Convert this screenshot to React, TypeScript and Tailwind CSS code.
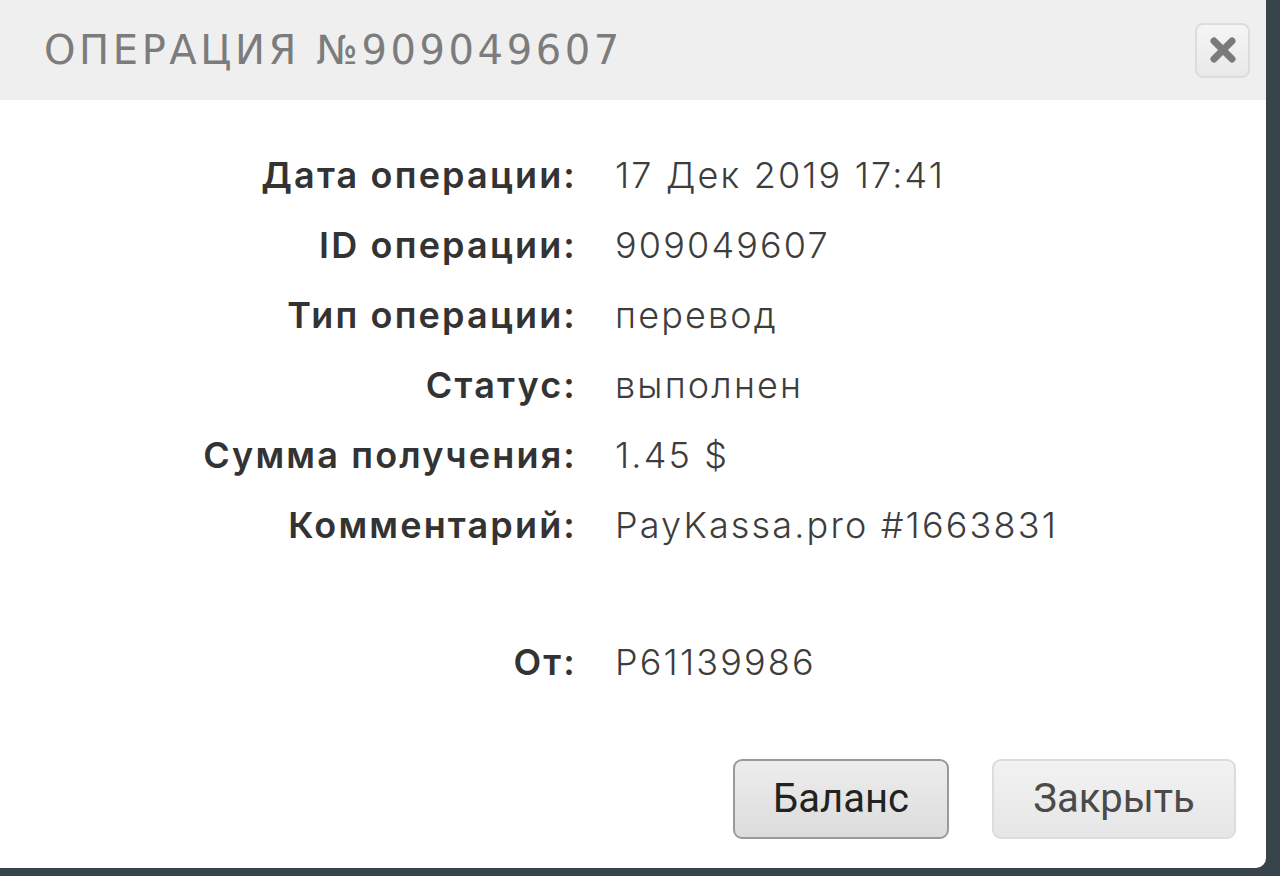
const rows = [
  { label: 'Дата операции:', value: '17 Дек 2019 17:41' },
  { label: 'ID операции:', value: '909049607' },
  { label: 'Тип операции:', value: 'перевод' },
  { label: 'Статус:', value: 'выполнен' },
  { label: 'Сумма получения:', value: '1.45 $' },
  { label: 'Комментарий:', value: 'PayKassa.pro #1663831' },
];

function Row({ label, value }: { label: string; value: string }) {
  return (
    <div className="flex items-center h-[70px]">
      <div className="w-[577px] text-right font-semibold text-[#333333] tracking-[0.06em]">{label}</div>
      <div className="pl-[38px] text-[#3d3d3d] font-light tracking-[0.06em]">{value}</div>
    </div>
  );
}

export default function App() {
  return (
    <div className="w-full h-[876px] bg-[#37454b] flex items-start">
      <div className="w-[1266px] h-[868px] bg-white rounded-br-[10px] flex flex-col overflow-hidden">
        {/* Header */}
        <div className="h-[100px] shrink-0 bg-[#efefef] pl-[44px] pr-[16px] flex items-center justify-between">
          <h1
            className="text-[40px] text-[#7c7c7c] tracking-[0.09em] leading-none"
            style={{ fontFamily: '"DejaVu Sans", sans-serif' }}
          >
            ОПЕРАЦИЯ №909049607
          </h1>
          <button className="w-[55px] h-[55px] rounded-[8px] border-2 border-[#dcdcdc] bg-gradient-to-b from-[#f5f5f5] to-[#e9e9e9] flex items-center justify-center">
            <svg viewBox="0 0 28 28" className="w-[28px] h-[28px]">
              <path d="M5 5 L23 23 M23 5 L5 23" stroke="#7a7a7a" strokeWidth="7" strokeLinecap="round" fill="none" />
            </svg>
          </button>
        </div>

        {/* Details */}
        <div
          className="pt-[40px] text-[36px] leading-none"
          style={{ fontFamily: 'Inter, "Noto Sans", sans-serif' }}
        >
          {rows.map((r) => (
            <Row key={r.label} label={r.label} value={r.value} />
          ))}
          <div className="h-[67px]" />
          <Row label="От:" value="P61139986" />
        </div>

        {/* Buttons */}
        <div
          className="mt-auto mb-[29px] pr-[30px] flex justify-end gap-[43px] text-[40px]"
          style={{ fontFamily: 'Roboto, sans-serif' }}
        >
          <button className="w-[216px] h-[80px] rounded-[9px] border-2 border-[#9a9a9a] bg-gradient-to-b from-[#ededed] to-[#dcdcdc] text-[#222222]">
            Баланс
          </button>
          <button className="w-[244px] h-[80px] rounded-[9px] border-2 border-[#dcdcdc] bg-gradient-to-b from-[#f2f2f2] to-[#e6e6e6] text-[#4a4a4a]">
            Закрыть
          </button>
        </div>
      </div>
    </div>
  );
}
